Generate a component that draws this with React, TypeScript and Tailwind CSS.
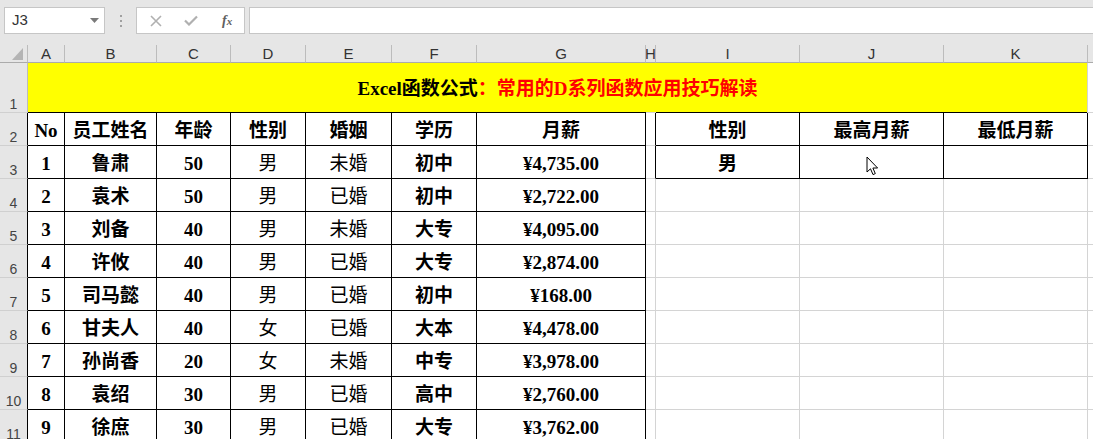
import React from "react";

const GRID = "#d4d4d4";

const COLS = ["A", "B", "C", "D", "E", "F", "G", "H", "I", "J", "K"];

const HEAD = ["No", "员工姓名", "年龄", "性别", "婚姻", "学历", "月薪"];

const ROWS = [
  ["1", "鲁肃", "50", "男", "未婚", "初中", "¥4,735.00"],
  ["2", "袁术", "50", "男", "已婚", "初中", "¥2,722.00"],
  ["3", "刘备", "40", "男", "未婚", "大专", "¥4,095.00"],
  ["4", "许攸", "40", "男", "已婚", "大专", "¥2,874.00"],
  ["5", "司马懿", "40", "男", "已婚", "初中", "¥168.00"],
  ["6", "甘夫人", "40", "女", "已婚", "大本", "¥4,478.00"],
  ["7", "孙尚香", "20", "女", "未婚", "中专", "¥3,978.00"],
  ["8", "袁绍", "30", "男", "已婚", "高中", "¥2,760.00"],
  ["9", "徐庶", "30", "男", "已婚", "大专", "¥3,762.00"],
];

const cellFont = { fontFamily: "'Liberation Serif', 'Noto Sans CJK SC', serif" };

function RowHead({ n, black }: { n: number; black?: boolean }) {
  return (
    <div
      className={`flex items-end justify-center bg-[#e6e6e6] border-b border-r border-b-[#d0d0d0] pb-[1px] text-[14px] leading-none text-[#444] ${
        black ? "border-r-black" : "border-r-[#bcbcbc]"
      }`}
      style={{ fontFamily: "'Liberation Sans', sans-serif" }}
    >
      {n}
    </div>
  );
}

function Cell({
  children,
  r = "gray",
  b = "gray",
  thin,
}: {
  children?: React.ReactNode;
  r?: "gray" | "black";
  b?: "gray" | "black";
  thin?: boolean;
}) {
  return (
    <div
      className={`flex items-center justify-center pt-[3px] border-r border-b bg-white text-[19px] leading-none text-black whitespace-nowrap ${
        r === "black" ? "border-r-black" : "border-r-[#d4d4d4]"
      } ${b === "black" ? "border-b-black" : "border-b-[#d4d4d4]"} ${
        thin ? "font-normal" : "font-bold"
      }`}
      style={cellFont}
    >
      {children}
    </div>
  );
}

function Cursor() {
  return (
    <svg
      className="absolute left-[66px] top-[10px]"
      width="14"
      height="21"
      viewBox="0 0 14 21"
    >
      <path
        d="M1 1 L1 16 L4.5 12.8 L7 18.6 L9.3 17.6 L6.9 12 L11.6 12 Z"
        fill="#fff"
        stroke="#000"
        strokeWidth="1"
        strokeLinejoin="round"
      />
    </svg>
  );
}

function FormulaBar() {
  return (
    <div
      className="flex h-[45px] items-start bg-[#e6e6e6] pt-[7px]"
      style={{ fontFamily: "'Liberation Sans', sans-serif" }}
    >
      <div className="ml-[4px] flex h-[27px] w-[101px] items-center justify-between border border-[#c6c6c6] bg-white pl-[7px] pr-[5px]">
        <span className="text-[15px] text-[#333]">J3</span>
        <svg width="9" height="6" viewBox="0 0 9 6">
          <path d="M0 0 L9 0 L4.5 5 Z" fill="#7a7a7a" />
        </svg>
      </div>
      <div className="flex h-[27px] w-[31px] flex-col items-center justify-center gap-[3px]">
        <span className="h-[2px] w-[2px] bg-[#a0a0a0]" />
        <span className="h-[2px] w-[2px] bg-[#a0a0a0]" />
        <span className="h-[2px] w-[2px] bg-[#a0a0a0]" />
      </div>
      <div className="flex h-[27px] w-[109px] items-center border border-[#c6c6c6] bg-white">
        <svg className="ml-[13px]" width="12" height="12" viewBox="0 0 12 12">
          <path d="M1 1 L11 11 M11 1 L1 11" stroke="#b0b0b0" strokeWidth="1.6" />
        </svg>
        <svg className="ml-[22px]" width="14" height="11" viewBox="0 0 14 11">
          <path d="M1 5.5 L5 9.5 L13 1.5" stroke="#b0b0b0" strokeWidth="2.2" fill="none" />
        </svg>
        <span
          className="ml-[24px] text-[14px] italic font-bold text-[#606060]"
          style={{ fontFamily: "'Liberation Serif', serif" }}
        >
          f<span className="text-[11px]">x</span>
        </span>
      </div>
      <div className="ml-[4px] h-[27px] flex-1 border border-[#c6c6c6] border-r-0 bg-white" />
    </div>
  );
}

export default function App() {
  return (
    <div className="h-[439px] w-[1093px] overflow-hidden bg-white">
      <FormulaBar />
      <div className="grid grid-cols-[28px_37px_92px_74px_75px_86px_85px_169px_10px_144px_144px_144px_1fr] grid-rows-[18px_50px_repeat(10,33px)]">
        {/* column headers */}
        <div className="relative bg-[#e6e6e6] border-r border-b border-r-[#bcbcbc] border-b-[#ababab]">
          <svg className="absolute right-[4px] bottom-[2px]" width="11" height="12" viewBox="0 0 11 12">
            <path d="M11 0 L11 12 L0 12 Z" fill="#b4b4b4" />
          </svg>
        </div>
        {COLS.map((c) => (
          <div
            key={c}
            className="flex items-end justify-center overflow-hidden bg-[#e6e6e6] border-r border-b border-r-[#bcbcbc] border-b-[#ababab] pb-[1px] text-[15px] leading-none text-[#333]"
            style={{ fontFamily: "'Liberation Sans', sans-serif" }}
          >
            {c}
          </div>
        ))}
        <div className="bg-[#e6e6e6] border-b border-b-[#ababab]" />

        {/* row 1: title */}
        <RowHead n={1} />
        <div className="col-span-11 flex flex-col bg-[#ffff00] border-r border-r-[#d4d4d4]">
          <div
            className="flex flex-1 items-center justify-center pt-[2px] text-[19px] font-bold leading-none whitespace-nowrap"
            style={cellFont}
          >
            <span className="text-black">Excel函数公式</span>
            <span className="text-[#ff0000]">：常用的D系列函数应用技巧解读</span>
          </div>
          <div className="flex h-px">
            <div className="w-[618px] bg-black" />
            <div className="w-[10px] bg-[#d4d4d4]" />
            <div className="flex-1 bg-black" />
          </div>
        </div>
        <div className="bg-white border-b border-b-[#d4d4d4]" />

        {/* row 2: headers */}
        <RowHead n={2} black />
        {HEAD.map((h) => (
          <Cell key={h} r="black" b="black">
            {h}
          </Cell>
        ))}
        <Cell r="black" />
        <Cell r="black" b="black">性别</Cell>
        <Cell r="black" b="black">最高月薪</Cell>
        <Cell r="black" b="black">最低月薪</Cell>
        <div className="bg-white border-b border-b-[#d4d4d4]" />

        {/* data rows */}
        {ROWS.map((row, i) => (
          <React.Fragment key={row[0]}>
            <RowHead n={i + 3} black />
            {row.map((v, j) => (
              <Cell key={j} r="black" b="black" thin={j === 3 || j === 4}>
                {v}
              </Cell>
            ))}
            {i === 0 ? (
              <>
                <Cell r="black" />
                <Cell r="black" b="black">男</Cell>
                <div className="relative border-r border-b border-black bg-white">
                  <Cursor />
                </div>
                <Cell r="black" b="black" />
              </>
            ) : (
              <>
                <Cell />
                <Cell />
                <Cell />
                <Cell />
              </>
            )}
            <div className="bg-white border-b" style={{ borderBottomColor: GRID }} />
          </React.Fragment>
        ))}
      </div>
    </div>
  );
}
